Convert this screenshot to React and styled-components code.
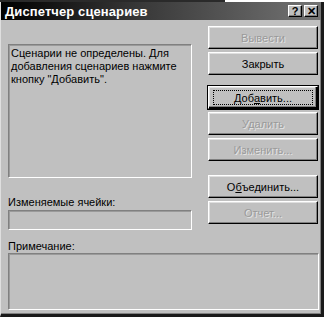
import React from "react";
import styled, { createGlobalStyle } from "styled-components";

const Global = createGlobalStyle`
  html, body {
    margin: 0;
    padding: 0;
    background: #fff;
  }
  body {
    font-family: "Liberation Sans", Arial, sans-serif;
    font-size: 11px;
    color: #000;
  }
`;

const Page = styled.div`
  width: 328px;
  height: 320px;
  overflow: hidden;
  background: #fff;
`;

const TopStrip = styled.div`
  display: flex;
  height: 2px;
  .dark {
    width: 225px;
    background: #2a2a2a;
  }
`;

const Window = styled.div`
  box-sizing: border-box;
  width: 324px;
  height: 315px;
  background: #c0c0c0;
  border-left: 1px solid #dfdfdf;
  border-right: 3px solid #1a1a1a;
  border-bottom: 3px solid #1a1a1a;
  box-shadow: inset -1px -1px 0 #808080;
  display: flex;
  flex-direction: column;
`;

const TitleBar = styled.div`
  height: 18px;
  display: flex;
  align-items: center;
  padding: 0 3px 0 4px;
  background: linear-gradient(to right, #000 0%, #3a3a3a 45%, #747474 100%);
`;

const Title = styled.div`
  flex: 1;
  color: #fff;
  font-weight: bold;
  font-size: 13px;
  letter-spacing: 0.1px;
`;

const CapButton = styled.div`
  box-sizing: border-box;
  width: 14px;
  height: 12px;
  margin-left: 2px;
  background: #c0c0c0;
  border-top: 1px solid #fff;
  border-left: 1px solid #fff;
  border-right: 1px solid #000;
  border-bottom: 1px solid #000;
  box-shadow: inset -1px -1px 0 #808080;
  display: flex;
  align-items: center;
  justify-content: center;
  font-weight: bold;
  font-size: 11px;
  line-height: 1;
`;

const Content = styled.div`
  flex: 1;
  padding: 6px 2px 4px 7px;
  display: flex;
  flex-direction: column;
`;

const TopGrid = styled.div`
  display: grid;
  grid-template-columns: 184px 110px;
  column-gap: 16px;
  height: 204px;
`;

const LeftCol = styled.div`
  display: flex;
  flex-direction: column;
`;

const Sunken = styled.div`
  box-sizing: border-box;
  height: ${(p) => p.$h}px;
  margin-top: ${(p) => p.$mt || 0}px;
  border-top: 1px solid #808080;
  border-left: 1px solid #808080;
  border-right: 1px solid #fff;
  border-bottom: 1px solid #fff;
  box-shadow: inset 1px 1px 0 #9a9a9a;
  padding: 2px 2px;
  line-height: 13px;
`;

const Label = styled.div`
  line-height: 13px;
  margin-top: ${(p) => p.$mt || 0}px;
`;

const RightCol = styled.div`
  display: flex;
  flex-direction: column;
`;

const Button = styled.div`
  box-sizing: border-box;
  width: 110px;
  height: 23px;
  margin-top: ${(p) => p.$mt || 0}px;
  background: #c0c0c0;
  border-top: 1px solid #fff;
  border-left: 1px solid #fff;
  border-right: 1px solid #000;
  border-bottom: 1px solid #000;
  box-shadow: inset -1px -1px 0 #808080, inset 1px 1px 0 #dfdfdf;
  display: flex;
  align-items: center;
  justify-content: center;
  color: ${(p) => (p.$disabled ? "#9a9a9a" : "#000")};
  text-shadow: ${(p) => (p.$disabled ? "1px 1px 0 #e4e4e4" : "none")};
  ${(p) =>
    p.$default &&
    `
    outline: 1px solid #000;
    outline-offset: 0;
    box-shadow: inset -1px -1px 0 #000, inset -2px -2px 0 #808080, inset 1px 1px 0 #dfdfdf;
  `}
`;

const Focus = styled.span`
  box-sizing: border-box;
  width: 100px;
  height: 15px;
  border: 1px dotted #000;
  display: flex;
  align-items: center;
  justify-content: center;
`;

const Key = styled.u`
  text-decoration: underline;
  text-underline-offset: 1px;
`;

export default function App() {
  return (
    <Page>
      <Global />
      <TopStrip>
        <div className="dark" />
      </TopStrip>
      <Window>
        <TitleBar>
          <Title>Диспетчер сценариев</Title>
          <CapButton>?</CapButton>
          <CapButton>✕</CapButton>
        </TitleBar>
        <Content>
          <TopGrid>
            <LeftCol>
              <Sunken $h={134} $mt={18}>
                Сценарии не определены. Для
                <br />
                добавления сценариев нажмите
                <br />
                кнопку "Добавить".
              </Sunken>
              <Label $mt={18}>Изменяемые ячейки:</Label>
              <Sunken $h={20} $mt={1} />
            </LeftCol>
            <RightCol>
              <Button $disabled>Вывести</Button>
              <Button $mt={3}>Закрыть</Button>
              <Button $mt={11} $default>
                <Focus>
                  Доб<Key>а</Key>вить...
                </Focus>
              </Button>
              <Button $mt={3} $disabled>Удалить</Button>
              <Button $mt={3} $disabled>Изменить...</Button>
              <Button $mt={14}>
                О<Key>б</Key>ъединить...
              </Button>
              <Button $mt={3} $disabled>Отчет...</Button>
            </RightCol>
          </TopGrid>
          <Label $mt={10}>Примечание:</Label>
          <Sunken $h={57} />
        </Content>
      </Window>
    </Page>
  );
}
